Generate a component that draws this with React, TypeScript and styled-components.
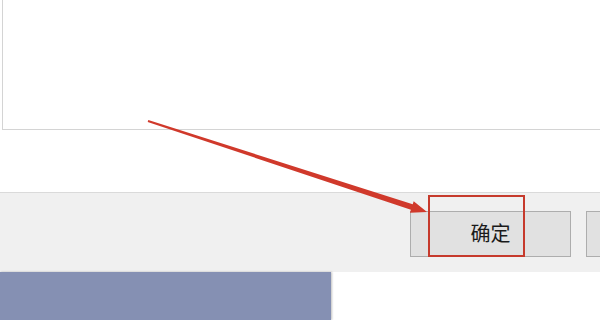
import React from 'react';
import styled, { createGlobalStyle } from 'styled-components';

const GlobalStyle = createGlobalStyle`
  html, body {
    margin: 0;
    padding: 0;
    background: #fff;
    overflow: hidden;
  }
  body {
    font-family: "Noto Sans CJK SC", "Noto Sans", sans-serif;
  }
`;

const Page = styled.div`
  position: relative;
  width: 600px;
  height: 320px;
  overflow: hidden;
  display: flex;
  flex-direction: column;
`;

const ContentArea = styled.div`
  height: 192px;
  padding-left: 2px;
  box-sizing: border-box;
`;

const TextBox = styled.div`
  height: 130px;
  box-sizing: border-box;
  border: 1px solid #d4d4d4;
  border-top: none;
  border-right: none;
  background: #fff;
`;

const Footer = styled.div`
  height: 80px;
  box-sizing: border-box;
  border-top: 1px solid #dadada;
  background: #f0f0f0;
  display: flex;
  align-items: center;
  gap: 15px;
  padding-left: 410px;
  padding-top: 2px;
  overflow: hidden;
`;

const Button = styled.button`
  flex-shrink: 0;
  width: 161px;
  height: 46px;
  box-sizing: border-box;
  background: #e1e1e1;
  border: 1px solid #adadad;
  border-radius: 0;
  font-family: "Noto Sans CJK SC", "Noto Sans", sans-serif;
  font-size: 20px;
  color: #1a1a1a;
  padding: 0 0 3px;
`;

const Bottom = styled.div`
  flex: 1;
  display: flex;
`;

const TaskPanel = styled.div`
  width: 331px;
  background: #8590b3;
  box-shadow: 1px 0 2px rgba(0, 0, 0, 0.25);
`;

const Highlight = styled.div`
  position: absolute;
  left: 428px;
  top: 195px;
  width: 97px;
  height: 62px;
  box-sizing: border-box;
  border: 2px solid #c63a2c;
  pointer-events: none;
`;

const Overlay = styled.svg`
  position: absolute;
  left: 0;
  top: 0;
  pointer-events: none;
`;

const App: React.FC = () => {
  return (
    <>
      <GlobalStyle />
      <Page>
        <ContentArea>
          <TextBox />
        </ContentArea>
        <Footer>
          <Button>确定</Button>
          <Button aria-label="取消" />
        </Footer>
        <Bottom>
          <TaskPanel />
        </Bottom>
        <Highlight />
        <Overlay width="600" height="320" viewBox="0 0 600 320">
          <polygon
            fill="#d0392b"
            points="148.3,120.1 412.7,204.2 413.7,201.3 427,212 409.9,212.7 410.9,209.8 147.7,121.9"
          />
        </Overlay>
      </Page>
    </>
  );
};

export default App;
